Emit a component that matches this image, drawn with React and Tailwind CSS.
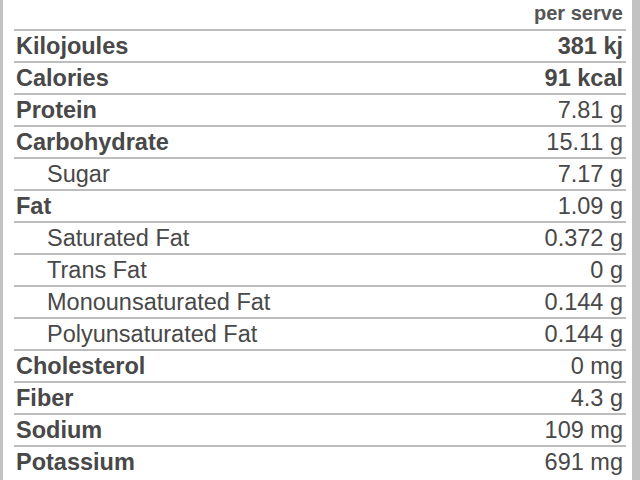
export default function App() {
  const rows = [
    ["Kilojoules", "381 kj", true, false, true],
    ["Calories", "91 kcal", true, false, true],
    ["Protein", "7.81 g", true, false, false],
    ["Carbohydrate", "15.11 g", true, false, false],
    ["Sugar", "7.17 g", false, true, false],
    ["Fat", "1.09 g", true, false, false],
    ["Saturated Fat", "0.372 g", false, true, false],
    ["Trans Fat", "0 g", false, true, false],
    ["Monounsaturated Fat", "0.144 g", false, true, false],
    ["Polyunsaturated Fat", "0.144 g", false, true, false],
    ["Cholesterol", "0 mg", true, false, false],
    ["Fiber", "4.3 g", true, false, false],
    ["Sodium", "109 mg", true, false, false],
    ["Potassium", "691 mg", true, false, false],
  ];
  return (
    <div
      className="flex h-[480px] w-[640px] overflow-hidden bg-white text-[#484848]"
      style={{ fontFamily: '"Liberation Sans", Arial, sans-serif' }}
    >
      <div className="w-[3px] shrink-0 bg-[#c2c2c2]" />
      <div className="flex-1 ml-[11px] mr-[6px] flex flex-col">
        <div className="h-[29px] shrink-0 flex justify-end pt-[1px] pr-[3px] text-[20px] leading-[24px] font-bold text-[#555555]">
          per serve
        </div>
        {rows.map(([label, value, bold, indent, boldVal], i) => (
          <div
            key={i}
            className="h-[32px] shrink-0 border-t-2 border-[#bdbdbd] flex items-center justify-between pl-[2px] pr-[3px] text-[23.5px] leading-[30px]"
          >
            <span className={(bold ? "font-bold " : "") + (indent ? "pl-[31px]" : "")}>{label}</span>
            <span className={boldVal ? "font-bold" : ""}>{value}</span>
          </div>
        ))}
      </div>
      <div className="w-[8px] shrink-0 bg-[#c2c2c2]" />
    </div>
  );
}
